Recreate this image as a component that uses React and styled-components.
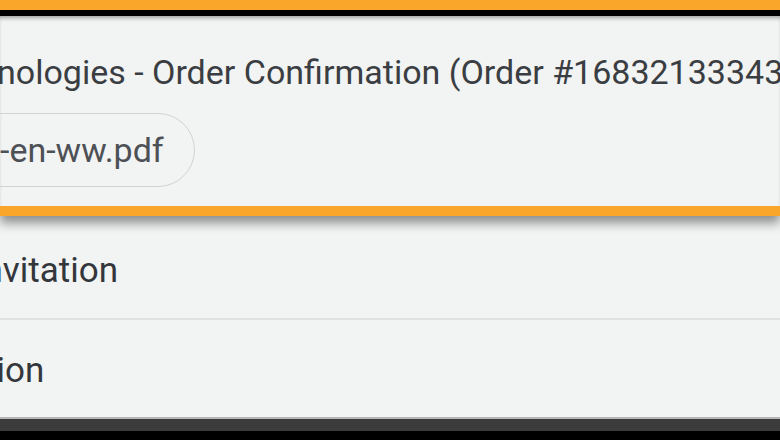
import React from "react";
import styled, { createGlobalStyle } from "styled-components";

const GlobalStyle = createGlobalStyle`
  html, body {
    margin: 0;
    padding: 0;
    background: #000;
  }
  body {
    font-family: "Roboto", "Liberation Sans", sans-serif;
  }
`;

const Frame = styled.div`
  width: 780px;
  height: 440px;
  overflow: hidden;
  display: flex;
  flex-direction: column;
  background: #f2f3f3;
`;

const TopEdge = styled.div`
  flex: none;
  height: 6px;
  background: #000;
  border-top: 10px solid #faa62b;
`;

const SelectedCard = styled.div`
  flex: none;
  position: relative;
  z-index: 1;
  box-sizing: border-box;
  height: 200px;
  padding: 35px 0 0;
  background: #f2f3f3;
  border-bottom: 10px solid #faa62b;
  box-shadow: inset 0 4px 4px -2px rgba(0, 0, 0, 0.35),
    0 7px 10px rgba(0, 0, 0, 0.42);
  display: flex;
  flex-direction: column;
  gap: 20px;
`;

const Subject = styled.div`
  font-size: 34px;
  line-height: 42px;
  color: #3a3e42;
  white-space: nowrap;
  overflow: hidden;
  margin-left: -3px;
`;

const Attachment = styled.div`
  align-self: flex-start;
  display: inline-flex;
  align-items: center;
  height: 74px;
  box-sizing: border-box;
  margin-left: -40px;
  padding: 0 30px 0 39px;
  border: 1.5px solid #d0d3d6;
  border-radius: 37px;
  font-size: 34px;
  line-height: 40px;
  color: #4d5156;
  white-space: nowrap;
`;

const Row = styled.div`
  flex: none;
  box-sizing: border-box;
  height: ${(p) => p.$height}px;
  padding-top: ${(p) => p.$top}px;
  font-size: 35px;
  line-height: 42px;
  color: #33373b;
  white-space: nowrap;
  overflow: hidden;
`;

const Clipped = styled.span`
  display: inline-block;
  margin-left: ${(p) => p.$shift}px;
`;

const Divider = styled.div`
  flex: none;
  height: 2px;
  background: #dfe1e3;
`;

const BottomEdge = styled.div`
  flex: none;
  height: 12px;
  background: #3b3b3b;
  border-top: 2px solid #b4b6b8;
  border-bottom: 9px solid #000;
`;

export default function App() {
  return (
    <>
      <GlobalStyle />
      <Frame>
        <TopEdge />
        <SelectedCard>
          <Subject>nologies - Order Confirmation (Order #16832133343)</Subject>
          <Attachment>-en-ww.pdf</Attachment>
        </SelectedCard>
        <Row $height={102} $top={34}>
          <Clipped $shift={-26}>Invitation</Clipped>
        </Row>
        <Divider />
        <Row $height={97} $top={30}>
          <Clipped $shift={-15}>tion</Clipped>
        </Row>
        <BottomEdge />
      </Frame>
    </>
  );
}
